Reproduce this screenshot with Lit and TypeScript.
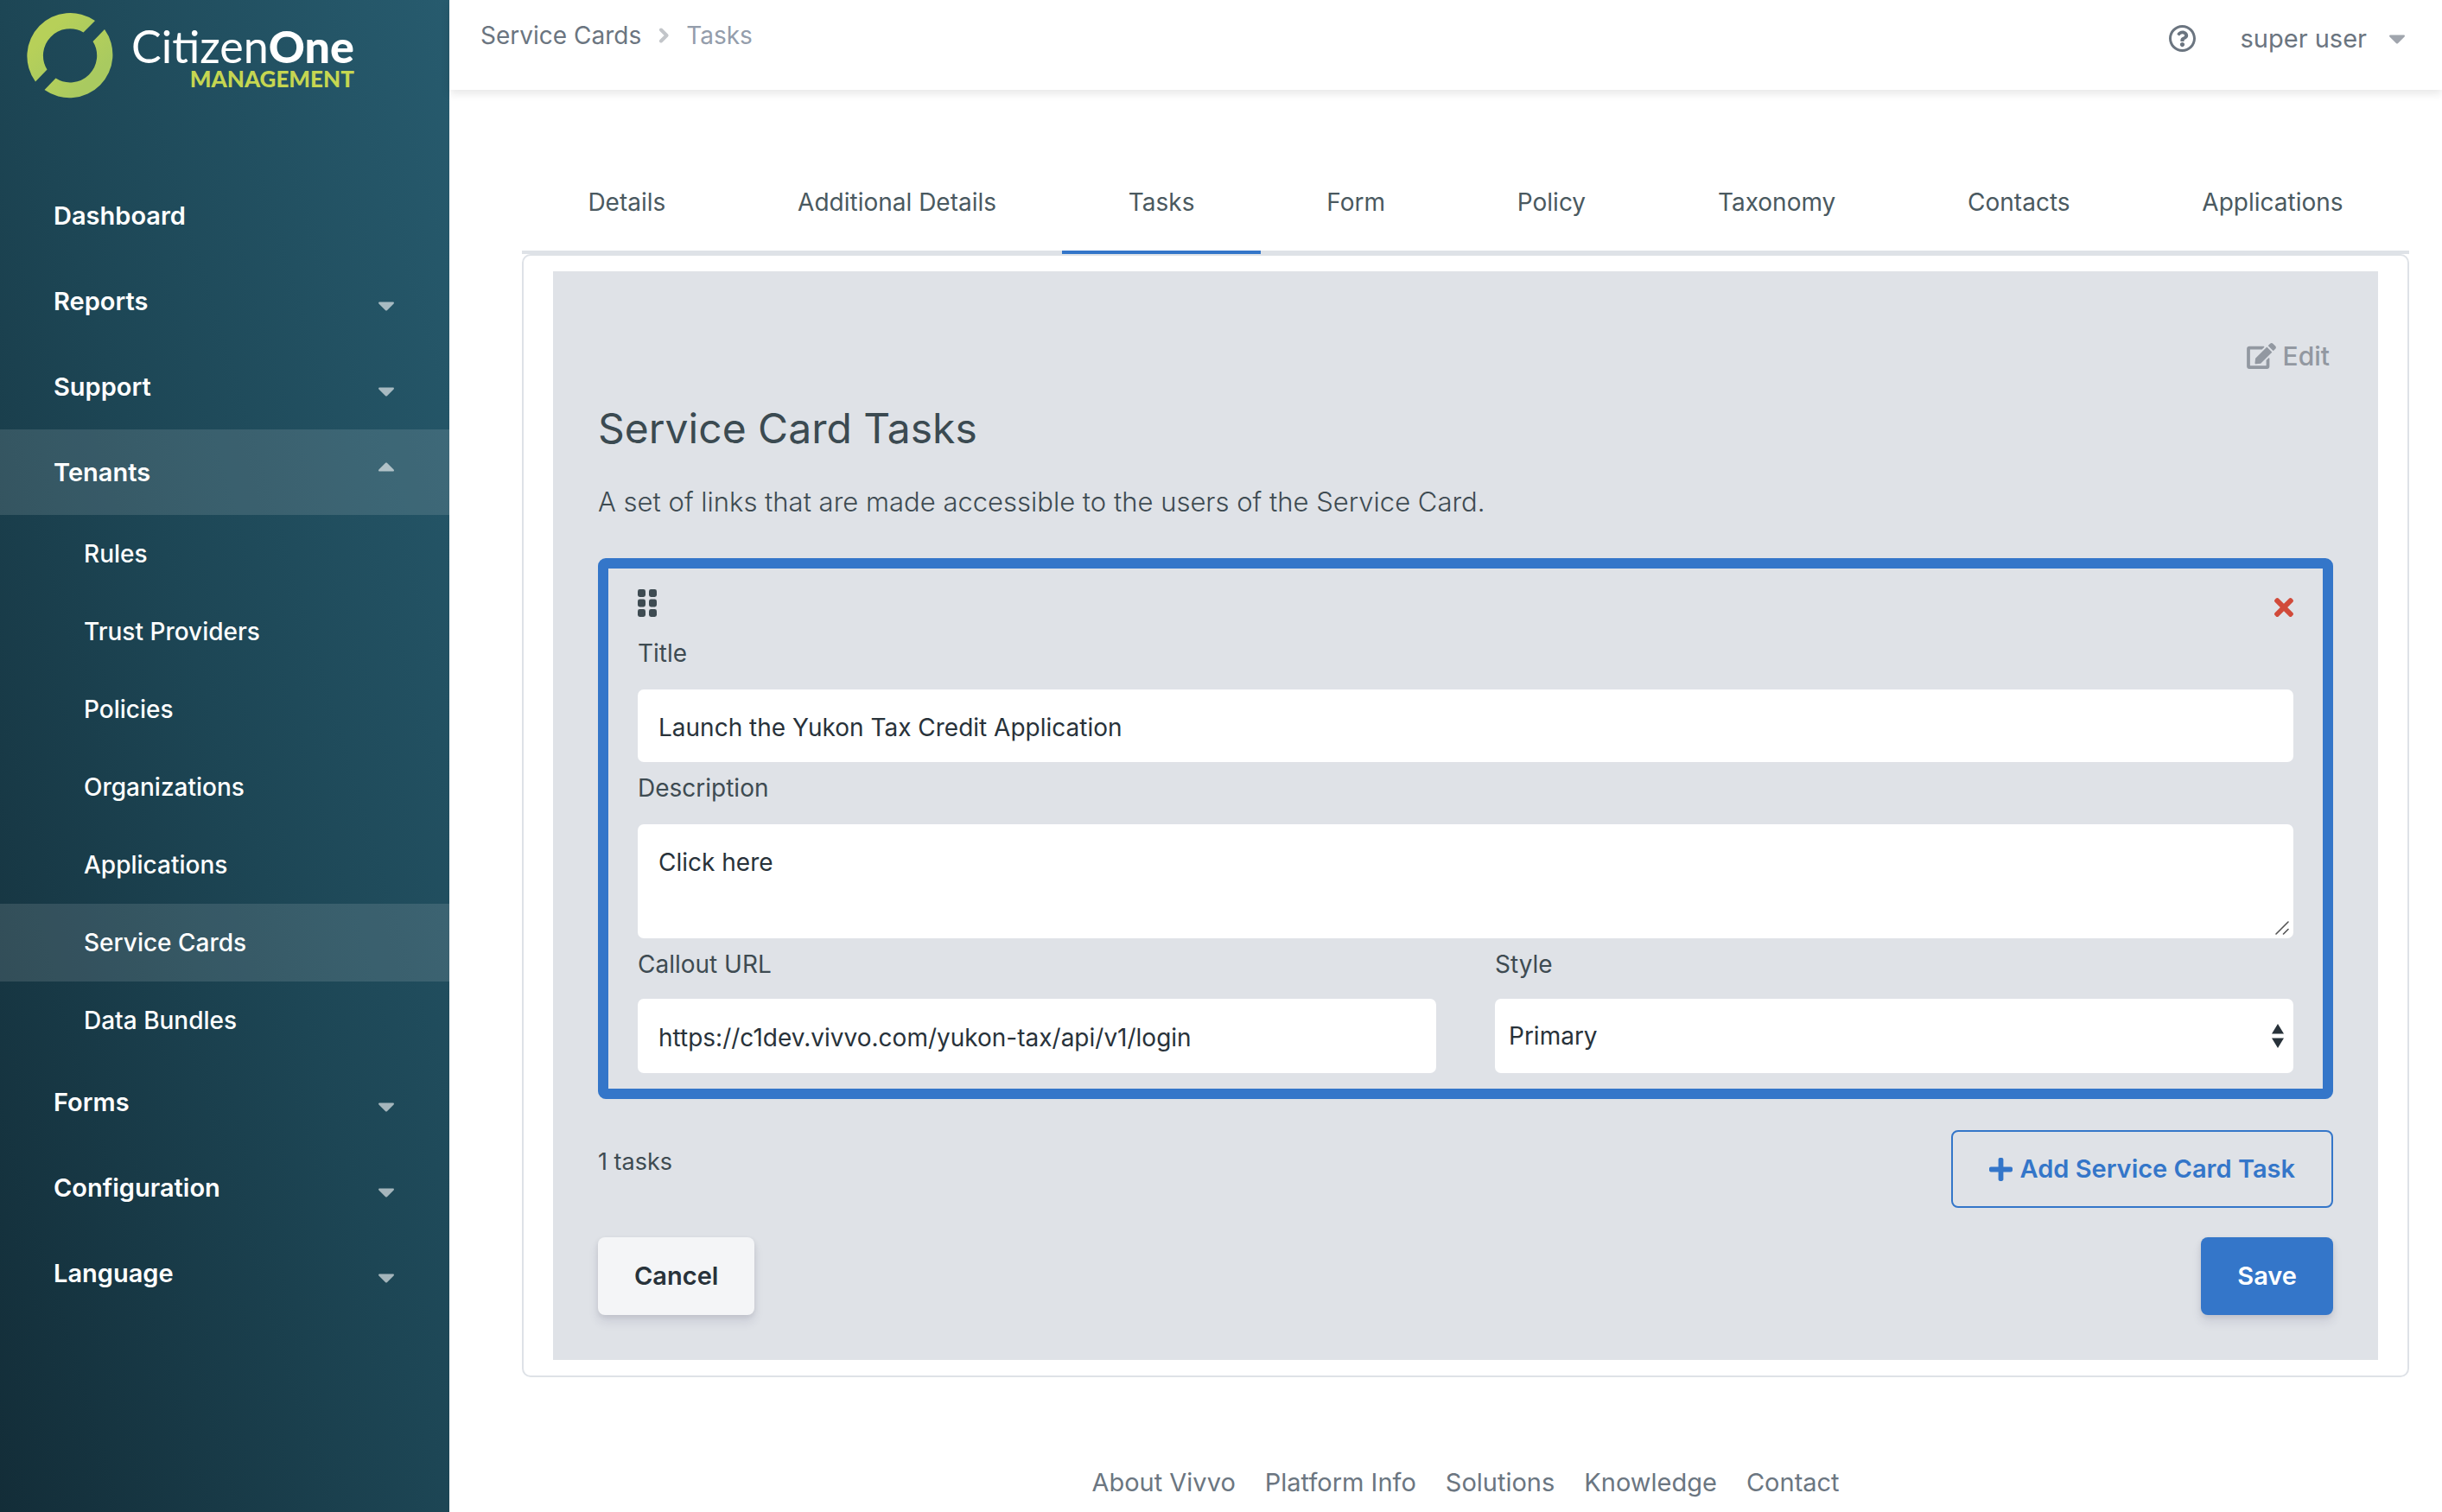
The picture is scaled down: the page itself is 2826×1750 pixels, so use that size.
import { LitElement, html, css, svg, nothing } from "lit";
import { customElement, property, state } from "lit/decorators.js";
import { classMap } from "lit/directives/class-map.js";

const icons = {
  caretDown: svg`<svg viewBox="11 192 298 169" width="18" height="11" fill="currentColor" aria-hidden="true"><path d="M31.3 192h257.3c17.8 0 26.7 21.5 14.1 34.1L174.1 354.7c-7.8 7.8-20.5 7.8-28.3 0L17.2 226.1C4.6 213.5 13.7 192 31.3 192z"/></svg>`,
  caretUp: svg`<svg viewBox="11 151 298 169" width="18" height="11" fill="currentColor" aria-hidden="true"><path d="M288.7 320H31.3c-17.8 0-26.7-21.5-14.1-34.1l128.6-128.6c7.8-7.8 20.5-7.8 28.3 0l128.6 128.6c12.7 12.6 3.8 34.1-14 34.1z"/></svg>`,
  chevron: svg`<svg viewBox="0 0 12 18" width="12" height="18" fill="none" stroke="currentColor" stroke-width="4" stroke-linecap="round" stroke-linejoin="round" aria-hidden="true"><path d="M3 2.5 9.5 9 3 15.5"/></svg>`,
  help: svg`<svg viewBox="8 8 496 496" width="31" height="31" fill="currentColor" aria-hidden="true"><path d="M256 8C119.043 8 8 119.083 8 256c0 136.997 111.043 248 248 248s248-111.003 248-248C504 119.083 392.957 8 256 8zm0 448c-110.532 0-200-89.431-200-200 0-110.495 89.472-200 200-200 110.491 0 200 89.471 200 200 0 110.53-89.431 200-200 200zm107.244-255.2c0 67.052-72.421 68.084-72.421 92.863V300c0 6.627-5.373 12-12 12h-45.647c-6.627 0-12-5.373-12-12v-8.659c0-35.745 27.1-50.034 47.579-61.516 17.561-9.845 28.324-16.541 28.324-29.579 0-17.246-21.999-28.693-39.784-28.693-23.189 0-33.894 10.977-48.942 29.969-4.057 5.12-11.46 6.071-16.666 2.124l-27.824-21.098c-5.107-3.872-6.251-11.066-2.644-16.363C184.846 131.491 214.94 112 261.794 112c49.071 0 101.45 38.304 101.45 88.8zM298 368c0 23.159-18.841 42-42 42s-42-18.841-42-42 18.841-42 42-42 42 18.841 42 42z"/></svg>`,
  edit: svg`<svg viewBox="0 0 576 512" width="34" height="30" fill="currentColor" aria-hidden="true"><path d="M402.6 83.2l90.2 90.2c3.8 3.8 3.8 10 0 13.8L274.4 405.6l-92.8 10.3c-12.4 1.4-22.9-9.1-21.5-21.5l10.3-92.8L388.8 83.2c3.8-3.8 10-3.8 13.8 0zm162-22.9l-48.8-48.8c-15.2-15.2-39.9-15.2-55.2 0l-35.4 35.4c-3.8 3.8-3.8 10 0 13.8l90.2 90.2c3.8 3.8 10 3.8 13.8 0l35.4-35.4c15.2-15.3 15.2-40 0-55.2zM384 346.2V448H64V128h229.8c3.2 0 6.2-1.3 8.5-3.5l40-40c7.6-7.6 2.2-20.5-8.5-20.5H48C21.5 64 0 85.5 0 112v352c0 26.5 21.5 48 48 48h352c26.5 0 48-21.5 48-48V306.2c0-10.7-12.9-16-20.5-8.5l-40 40c-2.2 2.3-3.5 5.3-3.5 8.5z"/></svg>`,
  grip: svg`<svg viewBox="0 0 22 32" width="22" height="32" fill="currentColor" aria-hidden="true"><rect x="0" y="0" width="9" height="9" rx="2.4"/><rect x="13" y="0" width="9" height="9" rx="2.4"/><rect x="0" y="11.5" width="9" height="9" rx="2.4"/><rect x="13" y="11.5" width="9" height="9" rx="2.4"/><rect x="0" y="23" width="9" height="9" rx="2.4"/><rect x="13" y="23" width="9" height="9" rx="2.4"/></svg>`,
  times: svg`<svg viewBox="0 80 352 352" width="22" height="22" fill="currentColor" aria-hidden="true"><path d="M242.72 256l100.07-100.07c12.28-12.28 12.28-32.19 0-44.48l-22.24-22.24c-12.28-12.28-32.19-12.28-44.48 0L176 189.28 75.93 89.21c-12.28-12.28-32.19-12.28-44.48 0L9.21 111.45c-12.28 12.28-12.28 32.19 0 44.48L109.28 256 9.21 356.07c-12.28 12.28-12.28 32.19 0 44.48l22.24 22.24c12.28 12.28 32.2 12.28 44.48 0L176 322.72l100.07 100.07c12.28 12.28 32.2 12.28 44.48 0l22.24-22.24c12.28-12.28 12.28-32.19 0-44.48L242.72 256z"/></svg>`,
  plus: svg`<svg viewBox="0 32 448 448" width="27" height="27" fill="currentColor" aria-hidden="true"><path d="M416 208H272V64c0-17.67-14.33-32-32-32h-32c-17.67 0-32 14.33-32 32v144H32c-17.67 0-32 14.33-32 32v32c0 17.67 14.33 32 32 32h144v144c0 17.67 14.33 32 32 32h32c17.67 0 32-14.33 32-32V304h144c17.67 0 32-14.33 32-32v-32c0-17.67-14.33-32-32-32z"/></svg>`,
  sort: svg`<svg viewBox="0 0 14 28" width="14" height="28" fill="currentColor" aria-hidden="true"><path d="M7 0l7 11.5H0zM7 28L0 16.500h14z"/></svg>`,
  resize: svg`<svg viewBox="0 0 16 16" width="16" height="16" fill="none" stroke="currentColor" stroke-width="1.6" stroke-linecap="round" aria-hidden="true"><path d="M1 15 15 1M9.500 15 15 9.500"/></svg>`,
};

const base = css`
  *, *::before, *::after { box-sizing: border-box; }
  a { color: inherit; text-decoration: none; }
  ul { list-style: none; margin: 0; padding: 0; }
  button { font: inherit; color: inherit; background: none; border: 0; padding: 0; cursor: pointer; }
  svg { display: block; flex: none; }
`;

interface MenuItem {
  label: string;
  children?: string[];
  group?: boolean;
}

const menu: MenuItem[] = [
  { label: "Dashboard" },
  { label: "Reports", group: true },
  { label: "Support", group: true },
  {
    label: "Tenants",
    group: true,
    children: ["Rules", "Trust Providers", "Policies", "Organizations", "Applications", "Service Cards", "Data Bundles"],
  },
  { label: "Forms", group: true },
  { label: "Configuration", group: true },
  { label: "Language", group: true },
];

@customElement("app-sidebar")
export class AppSidebar extends LitElement {
  @state() private open = "Tenants";
  @property() current = "Service Cards";

  static styles = [
    base,
    css`
      :host {
        display: block;
        color: #fff;
        background: linear-gradient(to top right, #132d38, #1d4655 50%, #275b6e);
      }
      .logo { display: flex; gap: 21px; padding: 14px 31px 0; }
      .words { display: flex; flex-direction: column; padding-top: 13px; font-family: Lato, "Open Sans", sans-serif; text-align: right; }
      .name { font-size: 52px; line-height: 52px; }
      .name b { font-weight: 900; }
      .role { font-size: 26px; line-height: 24px; font-weight: 900; color: #c5d651; }
      .menu { margin-top: 86px; }
      .item {
        display: flex;
        align-items: center;
        justify-content: space-between;
        width: 100%;
        min-height: 99px;
        padding: 0 64px 0 62px;
        font-size: 29px;
        line-height: 36px;
        font-weight: 600;
        text-align: left;
      }
      .item svg { color: rgba(255, 255, 255, 0.6); margin-top: 12px; }
      .open svg { margin: 0 0 12px; }
      .open, .current { background: rgba(255, 255, 255, 0.12); }
      .sub {
        display: flex;
        align-items: center;
        min-height: 90px;
        padding-left: 97px;
        font-size: 28px;
        line-height: 36px;
        font-weight: 500;
      }
    `,
  ];

  private toggle(label: string) {
    this.open = this.open === label ? "" : label;
  }

  private renderItem(item: MenuItem) {
    if (!item.group) return html`<li><a class="item" href="#">${item.label}</a></li>`;
    const open = this.open === item.label;
    return html`<li>
      <button class=${classMap({ item: true, open })} type="button" aria-expanded=${open} @click=${() => this.toggle(item.label)}>
        ${item.label} ${open ? icons.caretUp : icons.caretDown}
      </button>
      ${open && item.children
        ? html`<ul>
            ${item.children.map(
              (c) => html`<li><a class=${classMap({ sub: true, current: c === this.current })} href="#">${c}</a></li>`,
            )}
          </ul>`
        : nothing}
    </li>`;
  }

  render() {
    return html`
      <a class="logo" href="#">
        <svg viewBox="0 0 100 100" width="100" height="100" aria-hidden="true">
          <defs>
            <linearGradient id="ring" x1="0" y1="0" x2="1" y2="1">
              <stop offset="0.3" stop-color="#b7d059" />
              <stop offset="0.7" stop-color="#a9ca60" />
            </linearGradient>
          </defs>
          <path fill="url(#ring)" d="M79 10A50 50 0 0 0 10 80.500L23.500 66.500A31 31 0 0 1 65.500 23.500Z" />
          <path fill="url(#ring)" d="M90 20A50 50 0 0 1 20.500 90L33.500 76.500A31 31 0 0 0 76.500 34Z" />
        </svg>
        <span class="words">
          <span class="name">Citizen<b>One</b></span>
          <span class="role">MANAGEMENT</span>
        </span>
      </a>
      <nav class="menu" aria-label="Main"><ul>${menu.map((m) => this.renderItem(m))}</ul></nav>
    `;
  }
}

@customElement("app-topbar")
export class AppTopbar extends LitElement {
  static styles = [
    base,
    css`
      :host {
        display: flex;
        justify-content: space-between;
        min-height: 104px;
        padding: 23px 43px 0 36px;
        color: #6b7580;
        background: #fff;
        box-shadow: 0 4px 10px rgba(0, 0, 0, 0.1);
        font-size: 28px;
        line-height: 36px;
      }
      .crumbs { display: flex; align-items: flex-start; gap: 20px; }
      .crumbs svg { color: #c2c5c9; margin-top: 9px; }
      .here { color: #949dab; }
      .tools { display: flex; align-items: flex-start; gap: 52px; padding-top: 4px; font-size: 29px; }
      .help { padding-top: 2px; }
      .user { display: flex; align-items: center; gap: 26px; }
      .user svg { color: #a0a5ad; }
    `,
  ];

  render() {
    return html`
      <nav class="crumbs" aria-label="Breadcrumb">
        <a href="#">Service Cards</a>${icons.chevron}<span class="here" aria-current="page">Tasks</span>
      </nav>
      <div class="tools">
        <button class="help" type="button" aria-label="Help">${icons.help}</button>
        <button class="user" type="button" aria-haspopup="menu">super user ${icons.caretDown}</button>
      </div>
    `;
  }
}

@customElement("task-editor")
export class TaskEditor extends LitElement {
  static styles = [
    base,
    css`
      :host {
        display: block;
        padding: 24px 34px 18px;
        border: 12px solid #3476c9;
        border-radius: 9px;
        font-size: 28px;
        line-height: 36px;
      }
      .bar { display: flex; justify-content: space-between; align-items: flex-end; margin-bottom: 24px; }
      .grip { cursor: move; }
      .remove { color: #d14a3a; }
      .field { display: flex; flex-direction: column; gap: 24px; margin-bottom: 12px; }
      .row { display: grid; grid-template-columns: 1fr 1fr; gap: 68px; }
      .row .field { gap: 22px; margin-bottom: 0; }
      .control {
        display: block;
        width: 100%;
        min-height: 84px;
        margin: 0;
        padding: 26px 24px 22px;
        border: 0;
        border-radius: 7px;
        background: #fff;
        color: #28323a;
        font: inherit;
      }
      .row .control { min-height: 86px; }
      textarea.control { height: 132px; resize: vertical; }
      textarea::-webkit-resizer { background: transparent; }
      .row select.control { appearance: none; padding: 0 16px; }
      .stack { display: grid; align-items: center; color: #28323a; }
      .stack > * { grid-area: 1 / 1; }
      .stack svg { justify-self: end; margin-right: 11px; pointer-events: none; }
      .grow svg { align-self: end; margin: 0 5px 4px 0; color: #555; }
    `,
  ];

  render() {
    return html`
      <div class="bar">
        <button class="grip" type="button" aria-label="Reorder task">${icons.grip}</button>
        <button class="remove" type="button" aria-label="Remove task">${icons.times}</button>
      </div>
      <div class="field">
        <label for="title">Title</label>
        <input class="control" id="title" type="text" value="Launch the Yukon Tax Credit Application" />
      </div>
      <div class="field">
        <label for="description">Description</label>
        <div class="stack grow">
          <textarea class="control" id="description" .value=${"Click here"}></textarea>
          ${icons.resize}
        </div>
      </div>
      <div class="row">
        <div class="field">
          <label for="url">Callout URL</label>
          <input class="control" id="url" type="text" value="https://c1dev.vivvo.com/yukon-tax/api/v1/login" />
        </div>
        <div class="field">
          <label for="style">Style</label>
          <div class="stack">
            <select class="control" id="style"><option>Primary</option></select>
            ${icons.sort}
          </div>
        </div>
      </div>
    `;
  }
}

const tabs = ["Details", "Additional Details", "Tasks", "Form", "Policy", "Taxonomy", "Contacts", "Applications"];
const footerLinks = ["About Vivvo", "Platform Info", "Solutions", "Knowledge", "Contact"];

@customElement("app-root")
export class AppRoot extends LitElement {
  @state() private tab = "Tasks";

  static styles = [
    base,
    css`
      :host {
        display: grid;
        grid-template-columns: 520px minmax(0, 1fr);
        min-height: 100vh;
        background: #fff;
        color: #3e4b52;
        font-family: Inter, "Liberation Sans", sans-serif;
        font-size: 29px;
        line-height: 36px;
      }
      .page { display: flex; flex-direction: column; }
      .content { padding: 74px 38px 0 84px; }
      .tabs { display: flex; border-bottom: 4px solid #dee2e7; color: #4a5960; font-size: 28px; }
      .tab { flex: 1 1 auto; padding: 38px 20px; margin-bottom: -4px; border-bottom: 4px solid transparent; }
      .active { border-color: #3476c9; }
      .card { padding: 18px 34px; border: 2px solid #dee2e7; border-radius: 10px; }
      .panel { padding: 80px 52px 52px; background: #dfe2e7; }
      .edit { display: flex; align-items: center; gap: 8px; margin-left: auto; padding-right: 4px; color: #9298a1; font-size: 30px; font-weight: 500; }
      h1 { margin: 36px 0 0; font-size: 48px; line-height: 60px; font-weight: 400; color: #3b4a51; }
      .lead { margin: 33px 0 43px; font-size: 31px; line-height: 44px; font-weight: 300; }
      .summary, .actions { display: flex; justify-content: space-between; align-items: flex-start; }
      .summary { margin-top: 36px; }
      .count { padding-top: 19px; font-size: 27px; }
      .actions { margin-top: 34px; }
      .btn {
        display: flex;
        align-items: center;
        gap: 8px;
        min-height: 90px;
        padding: 0 42px;
        border-radius: 8px;
        font-weight: 600;
      }
      .outline { border: 2px solid #3476c9; color: #3476c9; }
      .raised { box-shadow: 0 8px 12px rgba(50, 50, 93, 0.11), 0 2px 6px rgba(0, 0, 0, 0.08); }
      .light { background: #f4f5f7; color: #28323a; }
      .primary { background: #3476c9; color: #fff; }
      .footer { display: flex; justify-content: center; gap: 34px; padding: 104px 38px 16px 84px; color: #6b7681; }
    `,
  ];

  render() {
    return html`
      <app-sidebar></app-sidebar>
      <div class="page">
        <app-topbar></app-topbar>
        <main class="content">
          <div class="tabs" role="tablist">
            ${tabs.map(
              (t) => html`<button
                class=${classMap({ tab: true, active: t === this.tab })}
                type="button"
                role="tab"
                aria-selected=${t === this.tab}
                @click=${() => (this.tab = t)}
              >${t}</button>`,
            )}
          </div>
          <div class="card">
            <section class="panel">
              <button class="edit" type="button">${icons.edit} Edit</button>
              <h1>Service Card Tasks</h1>
              <p class="lead">A set of links that are made accessible to the users of the Service Card.</p>
              <task-editor></task-editor>
              <div class="summary">
                <span class="count">1 tasks</span>
                <button class="btn outline" type="button">${icons.plus} Add Service Card Task</button>
              </div>
              <div class="actions">
                <button class="btn raised light" type="button">Cancel</button>
                <button class="btn raised primary" type="button">Save</button>
              </div>
            </section>
          </div>
        </main>
        <footer class="footer">${footerLinks.map((l) => html`<a href="#">${l}</a>`)}</footer>
      </div>
    `;
  }
}
